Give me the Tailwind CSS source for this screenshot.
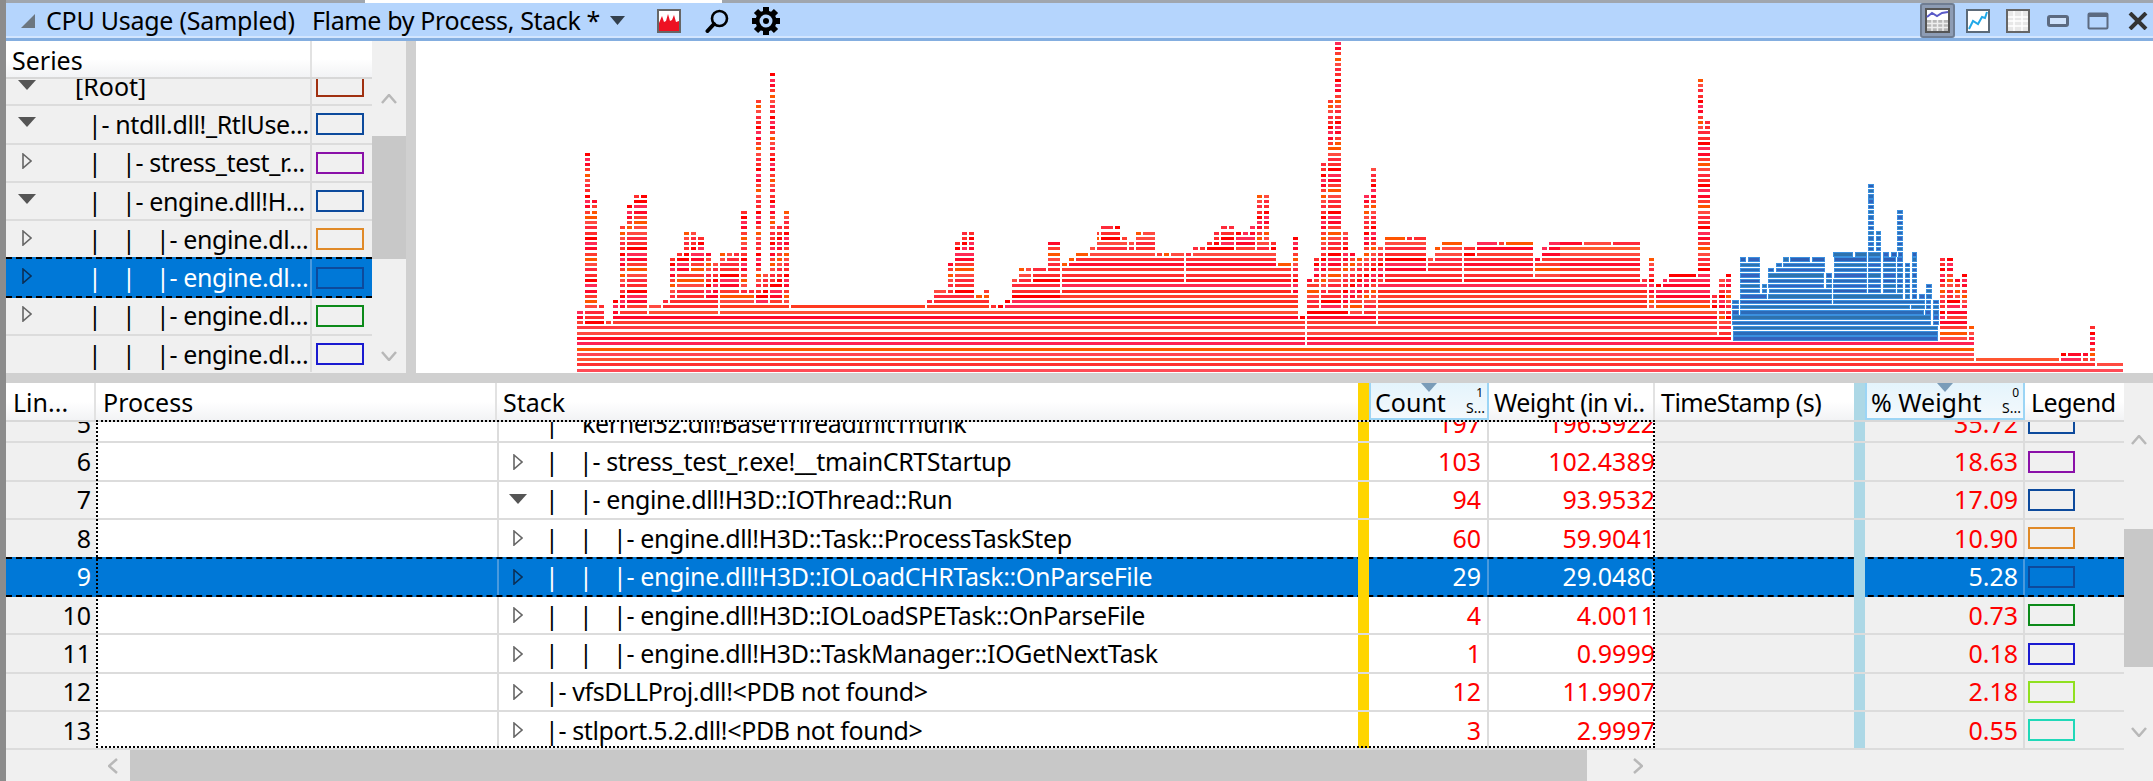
<!DOCTYPE html>
<html lang="en">
  <head>
    <meta charset="UTF-8" />
    <title>CPU Usage (Sampled)</title>
    <script src="https://cdn.jsdelivr.net/npm/@tailwindcss/browser@4"></script>
  </head>
  <body class="w-[2153px] h-[781px] overflow-hidden bg-[#d0d0d0] text-black font-['Noto_Sans',sans-serif] text-[25px] leading-none">
    <!-- shared tree arrows -->
    <svg class="hidden">
      <symbol id="tri-closed" viewBox="0 0 10 16"><path d="M1 1 L9 8 L1 15 Z" fill="none" stroke="currentColor" stroke-width="1.6" /></symbol>
      <symbol id="tri-open" viewBox="0 0 18 10"><path d="M0 0 H18 L9 10 Z" fill="#555" /></symbol>
    </svg>

    <div class="flex h-[781px]">
      <div class="w-[6px] shrink-0 bg-[#8c8c8c]"></div>
      <main class="flex-1 flex flex-col min-w-0">
        <!-- title bar -->
        <div class="h-[3px] flex bg-[#a0a6ae]"><div class="ml-[359px] w-[357px] bg-white"></div></div>
        <header class="h-[38px] flex items-center bg-[#b5d5fd] border-b-[3px] border-[#84aee0] shadow-[inset_0_-2px_0_#d2e5fe]">
          <svg class="ml-[15px] w-[14px] h-[14px]" viewBox="0 0 14 14"><path d="M14 0 V14 H0 Z" fill="#6c7680" /></svg>
          <span class="ml-[11px] w-[266px] whitespace-nowrap tracking-[-0.01em]">CPU Usage (Sampled)</span>
          <span class="w-[298px] whitespace-nowrap tracking-[-0.015em]">Flame by Process, Stack *</span>
          <svg class="w-[15px] h-[9px]" viewBox="0 0 15 9"><path d="M0 0 H15 L7.5 9 Z" fill="#33404d" /></svg>
          <svg class="ml-[32px] w-[24px] h-[24px]" viewBox="0 0 24 24">
            <rect x="1" y="1" width="22" height="22" fill="#fff" stroke="#666" stroke-width="2" />
            <path d="M2 22 V14 L5 7 L7 13 L9 12 L11 5 L13 12 L15 11 L17 6 L19 13 L22 12 V22 Z" fill="#ee1122" />
          </svg>
          <svg class="ml-[24px] w-[24px] h-[24px]" viewBox="0 0 24 24" fill="none" stroke="#000">
            <circle cx="14.500" cy="9.500" r="7.500" stroke-width="2.600" />
            <path d="M9 15 L2.500 22" stroke-width="4" stroke-linecap="round" />
          </svg>
          <svg class="ml-[22px] w-[30px] h-[30px]" viewBox="0 0 30 30">
            <g stroke="#000" stroke-width="6">
              <path d="M15 1 V29" /><path d="M1 15 H29" /><path d="M5 5 L25 25" /><path d="M25 5 L5 25" />
            </g>
            <circle cx="15" cy="15" r="10.500" fill="#000" />
            <circle cx="15" cy="15" r="6.500" fill="#b5d5fd" />
            <circle cx="15" cy="15" r="3" fill="#000" />
          </svg>
          <!-- right side view buttons -->
          <div class="ml-auto flex items-center">
            <div class="w-[35px] h-[35px] flex items-center justify-center bg-[#8d9cb4] border-2 border-[#6f7d92] rounded-[3px]">
              <svg class="w-[25px] h-[25px]" viewBox="0 0 25 25">
                <rect x="1" y="1" width="23" height="23" fill="#fff" stroke="#555" stroke-width="2" />
                <path d="M2 9 L7 5 L12 8 L17 5 L23 4" fill="none" stroke="#5a5ac8" stroke-width="2" />
                <path d="M2 12 H23 V23 H2 Z" fill="#b8b8b8" />
                <path d="M2 15.500 H23 M2 19.500 H23 M7 12 V23 M12.500 12 V23 M18 12 V23" stroke="#eee" stroke-width="1.500" />
              </svg>
            </div>
            <svg class="ml-[11px] w-[24px] h-[24px]" viewBox="0 0 24 24">
              <rect x="1" y="1" width="22" height="22" fill="#fff" stroke="#5c6a78" stroke-width="2" />
              <path d="M3 20 L7 12 L12 15 L16 8 L19 9 L21 3" fill="none" stroke="#20a8e8" stroke-width="2" />
            </svg>
            <svg class="ml-[16px] w-[24px] h-[24px]" viewBox="0 0 24 24">
              <rect x="1" y="1" width="22" height="22" fill="#e8e8e8" stroke="#666" stroke-width="2" />
              <path d="M2 8 H22 M2 12 H22 M2 17 H22 M8 2 V22 M16 2 V22" stroke="#fff" stroke-width="1.500" />
            </svg>
            <svg class="ml-[17px] w-[22px] h-[12px]" viewBox="0 0 22 12">
              <rect x="1.500" y="1.500" width="19" height="9" rx="1.500" fill="#cfe2fb" stroke="#5c6a80" stroke-width="3" />
            </svg>
            <svg class="ml-[18px] w-[22px] h-[18px]" viewBox="0 0 22 18">
              <rect x="1.500" y="1.500" width="19" height="15" rx="1" fill="#b5d5fd" stroke="#5c6a80" stroke-width="2" />
              <path d="M1 3 H21" stroke="#5c6a80" stroke-width="4" />
            </svg>
            <svg class="ml-[19px] mr-[5px] w-[20px] h-[18px]" viewBox="0 0 20 18">
              <path d="M2 1 L18 17 M18 1 L2 17" stroke="#333" stroke-width="4" />
            </svg>
          </div>
        </header>

        <!-- series list + flame graph -->
        <section class="h-[332px] flex">
          <div class="w-[366px] flex flex-col overflow-hidden bg-[#f0f0f0]">
            <div class="h-[38px] shrink-0 relative z-20 flex bg-linear-to-b from-white from-50% to-[#f2f3f5] border-b-2 border-[#d8d8d8]">
              <div class="w-[306px] border-r-2 border-[#e2e2e2] pl-[6px] pt-[7px]">Series</div>
            </div>
            <div class="-mt-[13px]">
              <div class="flex h-[38.3px] items-center border-t-2 border-[#dcdcdc]">
                <div class="w-[306px] flex items-center border-r-2 border-[#dcdcdc] self-stretch"><svg class="ml-[12px] w-[18px] h-[10px] mt-[-2px]"><use href="#tri-open" /></svg><span class="ml-[39px]">[Root]</span></div>
                <div class="ml-[4px] w-[48px] h-[22px] border-2 border-[#a03010]"></div>
              </div>
              <div class="flex h-[38.3px] items-center border-t-2 border-[#dcdcdc]">
                <div class="w-[306px] flex items-center border-r-2 border-[#dcdcdc] self-stretch whitespace-pre overflow-hidden tracking-[-0.015em]"><svg class="shrink-0 ml-[12px] w-[18px] h-[10px] mt-[-4px]"><use href="#tri-open" /></svg><span class="ml-[52px]">|- ntdll.dll!_RtlUse...</span></div>
                <div class="ml-[4px] w-[48px] h-[22px] border-2 border-[#0d4a9c]"></div>
              </div>
              <div class="flex h-[38.3px] items-center border-t-2 border-[#dcdcdc]">
                <div class="w-[306px] flex items-center border-r-2 border-[#dcdcdc] self-stretch whitespace-pre overflow-hidden tracking-[-0.015em]"><svg class="shrink-0 ml-[16px] w-[10px] h-[16px] mt-[-3px] text-[#666]"><use href="#tri-closed" /></svg><span class="ml-[56px] w-[34px]">|</span><span>|- stress_test_r...</span></div>
                <div class="ml-[4px] w-[48px] h-[22px] border-2 border-[#8a10a8]"></div>
              </div>
              <div class="flex h-[38.3px] items-center border-t-2 border-[#dcdcdc]">
                <div class="w-[306px] flex items-center border-r-2 border-[#dcdcdc] self-stretch whitespace-pre overflow-hidden tracking-[-0.015em]"><svg class="shrink-0 ml-[12px] w-[18px] h-[10px] mt-[-4px]"><use href="#tri-open" /></svg><span class="ml-[52px] w-[34px]">|</span><span>|- engine.dll!H...</span></div>
                <div class="ml-[4px] w-[48px] h-[22px] border-2 border-[#0d4a9c]"></div>
              </div>
              <div class="flex h-[38.3px] items-center border-t-2 border-[#dcdcdc]">
                <div class="w-[306px] flex items-center border-r-2 border-[#dcdcdc] self-stretch whitespace-pre overflow-hidden tracking-[-0.015em]"><svg class="shrink-0 ml-[16px] w-[10px] h-[16px] mt-[-3px] text-[#666]"><use href="#tri-closed" /></svg><span class="ml-[56px] w-[34px]">|</span><span class="w-[34px]">|</span><span>|- engine.dl...</span></div>
                <div class="ml-[4px] w-[48px] h-[22px] border-2 border-[#e08a28]"></div>
              </div>
              <div class="relative z-10 flex h-[40.3px] -mb-[2px] items-center bg-[#0078d7] text-white border-y-2 border-dashed border-black">
                <div class="w-[306px] flex items-center border-r-2 border-[#4a9ade] self-stretch whitespace-pre overflow-hidden tracking-[-0.015em]"><svg class="shrink-0 ml-[16px] w-[10px] h-[16px] mt-[-3px] text-[#0b2f55]"><use href="#tri-closed" /></svg><span class="ml-[56px] w-[34px]">|</span><span class="w-[34px]">|</span><span>|- engine.dl...</span></div>
                <div class="ml-[4px] w-[48px] h-[22px] border-2 border-[#0d4a9c]"></div>
              </div>
              <div class="flex h-[38.3px] items-center border-t-2 border-[#dcdcdc]">
                <div class="w-[306px] flex items-center border-r-2 border-[#dcdcdc] self-stretch whitespace-pre overflow-hidden tracking-[-0.015em]"><svg class="shrink-0 ml-[16px] w-[10px] h-[16px] mt-[-3px] text-[#666]"><use href="#tri-closed" /></svg><span class="ml-[56px] w-[34px]">|</span><span class="w-[34px]">|</span><span>|- engine.dl...</span></div>
                <div class="ml-[4px] w-[48px] h-[22px] border-2 border-[#0c8a1a]"></div>
              </div>
              <div class="flex h-[38.3px] items-center border-t-2 border-[#dcdcdc]">
                <div class="w-[306px] flex items-center border-r-2 border-[#dcdcdc] self-stretch whitespace-pre overflow-hidden tracking-[-0.015em]"><span class="ml-[82px] w-[34px]">|</span><span class="w-[34px]">|</span><span>|- engine.dl...</span></div>
                <div class="ml-[4px] w-[48px] h-[22px] border-2 border-[#1a1ad0]"></div>
              </div>
            </div>
          </div>
          <!-- series scrollbar -->
          <div class="w-[34px] flex flex-col bg-[#f0f0f0]">
            <div class="h-[95px] flex items-end justify-center pb-[32px]">
              <svg class="w-[16px] h-[10px]" viewBox="0 0 16 10" fill="none" stroke="#b8b8b8" stroke-width="2.500"><path d="M1 9 L8 1 L15 9" /></svg>
            </div>
            <div class="h-[123px] bg-[#c8c8c8]"></div>
            <div class="flex-1 flex items-end justify-center pb-[12px]">
              <svg class="w-[16px] h-[10px]" viewBox="0 0 16 10" fill="none" stroke="#b8b8b8" stroke-width="2.500"><path d="M1 1 L8 9 L15 1" /></svg>
            </div>
          </div>
          <!-- flame graph -->
          <div class="ml-[10px] flex-1 bg-white">
            <svg id="flame" class="block" width="1737" height="332" viewBox="0 0 1737 332" shape-rendering="crispEdges"></svg>
          </div>
        </section>

        <div class="h-[10px] bg-[#d0d0d0]"></div>

        <!-- detail table -->
        <section class="h-[398px] flex relative">
          <div class="w-[2118px] flex flex-col bg-[#f0f0f0]">
            <div class="h-[39px] shrink-0 relative z-20 flex bg-linear-to-b from-white from-50% to-[#f2f3f5] border-b-2 border-[#d8d8d8]">
              <div class="w-[90px] border-r-2 border-[#e2e2e2] pl-[7px] pt-[7px]">Lin...</div>
              <div class="w-[401px] border-r-2 border-[#e2e2e2] pl-[7px] pt-[7px]">Process</div>
              <div class="w-[861px] pl-[6px] pt-[7px]">Stack</div>
              <div class="w-[11px] bg-[#ffd500]"></div>
              <div class="relative w-[120px] border-2 border-t-0 border-[#9cd5f5] bg-linear-to-b from-[#e4f4fc] to-[#f4f9fc] pl-[4px] pt-[7px]">Count
                <svg class="absolute top-0 left-[50px] w-[16px] h-[9px]" viewBox="0 0 16 9"><path d="M0 0 H16 L8 9 Z" fill="#7a9cb8" /></svg>
                <span class="absolute top-[4px] right-[4px] text-[12px]">1</span>
                <span class="absolute bottom-[3px] right-[2px] text-[14px]">S...</span>
              </div>
              <div class="w-[166px] border-r-2 border-[#e2e2e2] pl-[5px] pt-[7px] whitespace-nowrap overflow-hidden tracking-[-0.02em]">Weight (in vi..</div>
              <div class="w-[199px] pl-[6px] pt-[7px] whitespace-nowrap tracking-[-0.02em]">TimeStamp (s)</div>
              <div class="w-[11px] bg-[#add8e6]"></div>
              <div class="relative w-[160px] border-2 border-t-0 border-[#9cd5f5] bg-linear-to-b from-[#e4f4fc] to-[#f4f9fc] pl-[4px] pt-[7px] whitespace-nowrap">% Weight
                <svg class="absolute top-0 left-[70px] w-[16px] h-[9px]" viewBox="0 0 16 9"><path d="M0 0 H16 L8 9 Z" fill="#7a9cb8" /></svg>
                <span class="absolute top-[4px] right-[4px] text-[12px]">0</span>
                <span class="absolute bottom-[3px] right-[2px] text-[14px]">S...</span>
              </div>
              <div class="w-[99px] pl-[6px] pt-[7px] tracking-[-0.02em]">Legend</div>
            </div>
            <div class="-mt-[19px] flex-1 min-h-0 overflow-hidden">
              <div class="flex h-[38.4px] items-center border-t-2 border-[#dcdcdc]">
                <div class="w-[90px] self-stretch flex items-center justify-end pr-[5px]">5</div>
                <div class="w-[401px] self-stretch bg-white"></div>
                <div class="w-[861px] self-stretch flex items-center bg-white border-l-2 border-[#dcdcdc] whitespace-pre tracking-[-0.015em]"><span class="ml-[46px] w-[37px]">|</span><span>kernel32.dll!BaseThreadInitThunk</span></div>
                <div class="w-[11px] self-stretch bg-[#ffd500]"></div>
                <div class="w-[120px] self-stretch flex items-center justify-end pr-[6px] bg-white text-[#ff0000] border-r-2 border-[#dcdcdc]">197</div>
                <div class="w-[166px] self-stretch flex items-center justify-end bg-white text-[#ff0000] overflow-hidden">196.3922</div>
                <div class="w-[199px] self-stretch"></div>
                <div class="w-[11px] self-stretch bg-[#add8e6]"></div>
                <div class="w-[160px] self-stretch flex items-center justify-end pr-[5px] text-[#ff0000] border-r-2 border-[#dcdcdc]">35.72</div>
                <div class="ml-[3px] w-[47px] h-[22px] border-2 border-[#0d4a9c]"></div>
              </div>
              <div class="flex h-[38.4px] items-center border-t-2 border-[#dcdcdc]">
                <div class="w-[90px] self-stretch flex items-center justify-end pr-[5px]">6</div>
                <div class="w-[401px] self-stretch bg-white"></div>
                <div class="w-[861px] self-stretch flex items-center bg-white border-l-2 border-[#dcdcdc] whitespace-pre tracking-[-0.015em]"><svg class="ml-[14px] w-[10px] h-[16px] text-[#666]"><use href="#tri-closed" /></svg><span class="ml-[22px] w-[34px]">|</span><span>|- stress_test_r.exe!__tmainCRTStartup</span></div>
                <div class="w-[11px] self-stretch bg-[#ffd500]"></div>
                <div class="w-[120px] self-stretch flex items-center justify-end pr-[6px] bg-white text-[#ff0000] border-r-2 border-[#dcdcdc]">103</div>
                <div class="w-[166px] self-stretch flex items-center justify-end bg-white text-[#ff0000] overflow-hidden">102.4389</div>
                <div class="w-[199px] self-stretch"></div>
                <div class="w-[11px] self-stretch bg-[#add8e6]"></div>
                <div class="w-[160px] self-stretch flex items-center justify-end pr-[5px] text-[#ff0000] border-r-2 border-[#dcdcdc]">18.63</div>
                <div class="ml-[3px] w-[47px] h-[22px] border-2 border-[#8a10a8]"></div>
              </div>
              <div class="flex h-[38.4px] items-center border-t-2 border-[#dcdcdc]">
                <div class="w-[90px] self-stretch flex items-center justify-end pr-[5px]">7</div>
                <div class="w-[401px] self-stretch bg-white"></div>
                <div class="w-[861px] self-stretch flex items-center bg-white border-l-2 border-[#dcdcdc] whitespace-pre tracking-[-0.015em]"><svg class="ml-[10px] w-[18px] h-[10px] mt-[-2px]"><use href="#tri-open" /></svg><span class="ml-[18px] w-[34px]">|</span><span>|- engine.dll!H3D::IOThread::Run</span></div>
                <div class="w-[11px] self-stretch bg-[#ffd500]"></div>
                <div class="w-[120px] self-stretch flex items-center justify-end pr-[6px] bg-white text-[#ff0000] border-r-2 border-[#dcdcdc]">94</div>
                <div class="w-[166px] self-stretch flex items-center justify-end bg-white text-[#ff0000] overflow-hidden">93.9532</div>
                <div class="w-[199px] self-stretch"></div>
                <div class="w-[11px] self-stretch bg-[#add8e6]"></div>
                <div class="w-[160px] self-stretch flex items-center justify-end pr-[5px] text-[#ff0000] border-r-2 border-[#dcdcdc]">17.09</div>
                <div class="ml-[3px] w-[47px] h-[22px] border-2 border-[#0d4a9c]"></div>
              </div>
              <div class="flex h-[38.4px] items-center border-t-2 border-[#dcdcdc]">
                <div class="w-[90px] self-stretch flex items-center justify-end pr-[5px]">8</div>
                <div class="w-[401px] self-stretch bg-white"></div>
                <div class="w-[861px] self-stretch flex items-center bg-white border-l-2 border-[#dcdcdc] whitespace-pre tracking-[-0.015em]"><svg class="ml-[14px] w-[10px] h-[16px] text-[#666]"><use href="#tri-closed" /></svg><span class="ml-[22px] w-[34px]">|</span><span class="w-[34px]">|</span><span>|- engine.dll!H3D::Task::ProcessTaskStep</span></div>
                <div class="w-[11px] self-stretch bg-[#ffd500]"></div>
                <div class="w-[120px] self-stretch flex items-center justify-end pr-[6px] bg-white text-[#ff0000] border-r-2 border-[#dcdcdc]">60</div>
                <div class="w-[166px] self-stretch flex items-center justify-end bg-white text-[#ff0000] overflow-hidden">59.9041</div>
                <div class="w-[199px] self-stretch"></div>
                <div class="w-[11px] self-stretch bg-[#add8e6]"></div>
                <div class="w-[160px] self-stretch flex items-center justify-end pr-[5px] text-[#ff0000] border-r-2 border-[#dcdcdc]">10.90</div>
                <div class="ml-[3px] w-[47px] h-[22px] border-2 border-[#e08a28]"></div>
              </div>
              <!-- selected row -->
              <div class="relative z-10 flex h-[40.4px] -mb-[2px] items-center bg-[#0078d7] text-white border-y-2 border-dashed border-black">
                <div class="w-[90px] self-stretch flex items-center justify-end pr-[5px]">9</div>
                <div class="w-[401px] self-stretch"></div>
                <div class="w-[861px] self-stretch flex items-center border-l-2 border-[#4a9ade] whitespace-pre tracking-[-0.015em]"><svg class="ml-[14px] w-[10px] h-[16px] text-[#0b2f55]"><use href="#tri-closed" /></svg><span class="ml-[22px] w-[34px]">|</span><span class="w-[34px]">|</span><span>|- engine.dll!H3D::IOLoadCHRTask::OnParseFile</span></div>
                <div class="w-[11px] -my-[2px] self-stretch bg-[#ffd500]"></div>
                <div class="w-[120px] self-stretch flex items-center justify-end pr-[6px] border-r-2 border-[#4a9ade]">29</div>
                <div class="w-[166px] self-stretch flex items-center justify-end overflow-hidden">29.0480</div>
                <div class="w-[199px] self-stretch"></div>
                <div class="w-[11px] -my-[2px] self-stretch bg-[#add8e6]"></div>
                <div class="w-[160px] self-stretch flex items-center justify-end pr-[5px] border-r-2 border-[#4a9ade]">5.28</div>
                <div class="ml-[3px] w-[47px] h-[22px] border-2 border-[#0d4a9c]"></div>
              </div>
              <div class="flex h-[38.4px] items-center border-t-2 border-[#dcdcdc]">
                <div class="w-[90px] self-stretch flex items-center justify-end pr-[5px]">10</div>
                <div class="w-[401px] self-stretch bg-white"></div>
                <div class="w-[861px] self-stretch flex items-center bg-white border-l-2 border-[#dcdcdc] whitespace-pre tracking-[-0.015em]"><svg class="ml-[14px] w-[10px] h-[16px] text-[#666]"><use href="#tri-closed" /></svg><span class="ml-[22px] w-[34px]">|</span><span class="w-[34px]">|</span><span>|- engine.dll!H3D::IOLoadSPETask::OnParseFile</span></div>
                <div class="w-[11px] self-stretch bg-[#ffd500]"></div>
                <div class="w-[120px] self-stretch flex items-center justify-end pr-[6px] bg-white text-[#ff0000] border-r-2 border-[#dcdcdc]">4</div>
                <div class="w-[166px] self-stretch flex items-center justify-end bg-white text-[#ff0000] overflow-hidden">4.0011</div>
                <div class="w-[199px] self-stretch"></div>
                <div class="w-[11px] self-stretch bg-[#add8e6]"></div>
                <div class="w-[160px] self-stretch flex items-center justify-end pr-[5px] text-[#ff0000] border-r-2 border-[#dcdcdc]">0.73</div>
                <div class="ml-[3px] w-[47px] h-[22px] border-2 border-[#0c8a1a]"></div>
              </div>
              <div class="flex h-[38.4px] items-center border-t-2 border-[#dcdcdc]">
                <div class="w-[90px] self-stretch flex items-center justify-end pr-[5px]">11</div>
                <div class="w-[401px] self-stretch bg-white"></div>
                <div class="w-[861px] self-stretch flex items-center bg-white border-l-2 border-[#dcdcdc] whitespace-pre tracking-[-0.015em]"><svg class="ml-[14px] w-[10px] h-[16px] text-[#666]"><use href="#tri-closed" /></svg><span class="ml-[22px] w-[34px]">|</span><span class="w-[34px]">|</span><span>|- engine.dll!H3D::TaskManager::IOGetNextTask</span></div>
                <div class="w-[11px] self-stretch bg-[#ffd500]"></div>
                <div class="w-[120px] self-stretch flex items-center justify-end pr-[6px] bg-white text-[#ff0000] border-r-2 border-[#dcdcdc]">1</div>
                <div class="w-[166px] self-stretch flex items-center justify-end bg-white text-[#ff0000] overflow-hidden">0.9999</div>
                <div class="w-[199px] self-stretch"></div>
                <div class="w-[11px] self-stretch bg-[#add8e6]"></div>
                <div class="w-[160px] self-stretch flex items-center justify-end pr-[5px] text-[#ff0000] border-r-2 border-[#dcdcdc]">0.18</div>
                <div class="ml-[3px] w-[47px] h-[22px] border-2 border-[#1a1ad0]"></div>
              </div>
              <div class="flex h-[38.4px] items-center border-t-2 border-[#dcdcdc]">
                <div class="w-[90px] self-stretch flex items-center justify-end pr-[5px]">12</div>
                <div class="w-[401px] self-stretch bg-white"></div>
                <div class="w-[861px] self-stretch flex items-center bg-white border-l-2 border-[#dcdcdc] whitespace-pre tracking-[-0.015em]"><svg class="ml-[14px] w-[10px] h-[16px] text-[#666]"><use href="#tri-closed" /></svg><span class="ml-[22px]">|- vfsDLLProj.dll!&lt;PDB not found&gt;</span></div>
                <div class="w-[11px] self-stretch bg-[#ffd500]"></div>
                <div class="w-[120px] self-stretch flex items-center justify-end pr-[6px] bg-white text-[#ff0000] border-r-2 border-[#dcdcdc]">12</div>
                <div class="w-[166px] self-stretch flex items-center justify-end bg-white text-[#ff0000] overflow-hidden">11.9907</div>
                <div class="w-[199px] self-stretch"></div>
                <div class="w-[11px] self-stretch bg-[#add8e6]"></div>
                <div class="w-[160px] self-stretch flex items-center justify-end pr-[5px] text-[#ff0000] border-r-2 border-[#dcdcdc]">2.18</div>
                <div class="ml-[3px] w-[47px] h-[22px] border-2 border-[#90e020]"></div>
              </div>
              <div class="flex h-[38.4px] items-center border-t-2 border-[#dcdcdc]">
                <div class="w-[90px] self-stretch flex items-center justify-end pr-[5px]">13</div>
                <div class="w-[401px] self-stretch bg-white"></div>
                <div class="w-[861px] self-stretch flex items-center bg-white border-l-2 border-[#dcdcdc] whitespace-pre tracking-[-0.015em]"><svg class="ml-[14px] w-[10px] h-[16px] text-[#666]"><use href="#tri-closed" /></svg><span class="ml-[22px]">|- stlport.5.2.dll!&lt;PDB not found&gt;</span></div>
                <div class="w-[11px] self-stretch bg-[#ffd500]"></div>
                <div class="w-[120px] self-stretch flex items-center justify-end pr-[6px] bg-white text-[#ff0000] border-r-2 border-[#dcdcdc]">3</div>
                <div class="w-[166px] self-stretch flex items-center justify-end bg-white text-[#ff0000] overflow-hidden">2.9997</div>
                <div class="w-[199px] self-stretch"></div>
                <div class="w-[11px] self-stretch bg-[#add8e6]"></div>
                <div class="w-[160px] self-stretch flex items-center justify-end pr-[5px] text-[#ff0000] border-r-2 border-[#dcdcdc]">0.55</div>
                <div class="ml-[3px] w-[47px] h-[22px] border-2 border-[#20d8b8]"></div>
              </div>
            </div>
            <!-- horizontal scrollbar -->
            <div class="h-[33px] shrink-0 flex bg-[#f0f0f0] border-t-2 border-[#dcdcdc]">
              <div class="w-[124px] flex items-center justify-end pr-[12px]">
                <svg class="w-[10px] h-[16px]" viewBox="0 0 10 16" fill="none" stroke="#b8b8b8" stroke-width="2.500"><path d="M9 1 L1 8 L9 15" /></svg>
              </div>
              <div class="w-[1457px] bg-[#c8c8c8]"></div>
              <div class="ml-[46px] flex items-center">
                <svg class="w-[10px] h-[16px]" viewBox="0 0 10 16" fill="none" stroke="#b8b8b8" stroke-width="2.500"><path d="M1 1 L9 8 L1 15" /></svg>
              </div>
            </div>
          </div>
          <!-- vertical scrollbar -->
          <div class="w-[29px] flex flex-col bg-[#f0f0f0]">
            <div class="h-[146px] flex items-start justify-center pt-[52px]">
              <svg class="w-[16px] h-[10px]" viewBox="0 0 16 10" fill="none" stroke="#b8b8b8" stroke-width="2.500"><path d="M1 9 L8 1 L15 9" /></svg>
            </div>
            <div class="h-[138px] bg-[#c8c8c8]"></div>
            <div class="h-[70px] flex items-end justify-center">
              <svg class="w-[16px] h-[10px]" viewBox="0 0 16 10" fill="none" stroke="#b8b8b8" stroke-width="2.500"><path d="M1 1 L8 9 L15 1" /></svg>
            </div>
          </div>
          <!-- dotted focus rectangle -->
          <div class="absolute z-30 left-[90px] top-[37px] w-[1559px] h-[328px] border-2 border-dotted border-black pointer-events-none"></div>
        </section>
      </main>
    </div>

    <script>
      // flame graph rows: "from-to:x0-x1 ..." measured off the reference, grouped by x range
      var pages = [
        { ox: 560, s: 3, rows: `0-8:50-1500
9:50-70 75-132 138-153 159-1500
10:50-70 75-132 159-1500
11:50-70 75-132 159-175 180-262 267-475 480-1500
12:75-112 117-132 159-175 180-196 201-262 267-303 309-475 480-688 693-1096 1101-1288 1293-1308 1314-1330 1335-1500
13:75-112 159-175 180-196 201-262 309-325 330-475 480-582 588-624 630-666 672-688 1101-1116 1122-1288 1335-1351 1356-1500
14:75-112 180-196 201-262 330-346 351-433 438-475 480-582 588-624 630-666 672-688 1122-1243 1248-1267 1272-1288 1356-1500
15:75-112 180-196 201-262 330-346 351-433 438-454 459-475 480-538 543-561 567-582 588-603 609-624 630-666 672-688 1122-1159 1164-1180 1185-1243 1272-1288 1356-1500
16:75-112 180-196 201-262 330-346 351-433 438-454 459-475 480-538 543-561 588-603 609-624 630-666 672-688 1164-1180 1185-1243 1356-1500
17:75-112 180-196 201-262 330-346 351-433 438-454 459-475 480-538 543-561 588-603 609-624 630-645 651-666 672-688 1164-1180 1185-1243 1356-1372 1377-1413 1419-1500
18:75-112 180-196 201-262 330-346 351-433 438-454 459-475 480-538 543-561 588-603 609-624 630-645 651-666 672-688 1164-1180 1185-1243 1377-1413 1419-1500
19:75-112 180-196 201-262 330-346 351-387 393-433 438-454 459-475 480-538 543-561 588-603 630-645 651-666 672-688 1164-1180 1185-1243 1377-1392 1398-1413 1419-1459 1464-1500
20:75-112 180-196 201-262 330-346 351-387 393-433 438-454 459-475 480-538 543-561 588-603 630-645 651-666 672-688 1164-1180 1185-1243 1464-1500
21:75-112 180-196 201-262 330-346 351-387 393-433 438-454 480-496 501-538 543-561 588-603 630-645 651-666 672-688 1185-1243 1464-1500
22:75-112 180-196 201-262 351-367 372-387 393-433 438-454 480-496 501-517 522-538 543-561 588-603 630-645 651-666 672-688 1185-1243 1464-1500
23-24:75-112 180-196 201-262 372-387 393-408 414-433 543-561 588-603 630-645 651-666 672-688 1185-1200 1206-1221 1227-1243 1464-1500
25:75-112 180-196 201-262 372-387 393-408 414-433 543-561 588-603 630-645 651-666 672-688 1206-1221 1227-1243
26:75-112 180-196 201-262 372-387 393-408 543-561 588-603 630-645 651-666 672-688 1206-1221 1227-1243
27:75-112 180-196 201-216 222-262 543-561 588-603 630-645 651-666 672-688
28-29:75-112 201-216 222-262 543-561 588-603 630-645 672-688
30:75-90 96-112 201-216 222-262 543-561 588-603 630-645 672-688
31:75-90 96-112 201-216 222-262 588-603 630-645
32:75-90 96-112 222-262 588-603 630-645
33:75-90 222-238 243-262 588-603 630-645
34-41:75-90 588-603 630-645
42-51:588-603 630-645
52-56:630-645` },
        { ox: 1060, s: 3, rows: `0-4:0-1500
5-8:0-735 741-1500
9:0-735 741-948 954-1500
10:0-714 720-735 741-948 954-1500
11:0-714 741-864 870-906 912-948 954-1500
12-13:0-714 741-777 783-843 849-864 870-906 912-948 954-1500
14:0-714 741-777 783-843 849-864 870-885 891-906 912-927 933-948 954-1500
15-16:6-693 699-714 741-777 783-798 804-843 849-864 870-885 891-906 912-927 933-948 954-1500
17:6-372 378-693 699-714 741-756 762-777 783-798 804-843 849-864 870-885 891-906 912-927 933-948 954-969 975-1206 1212-1500
18:6-372 378-693 699-714 762-777 783-798 804-843 849-864 870-885 891-906 912-927 933-948 954-969 975-1206 1212-1419 1425-1500
19:6-372 378-693 699-714 762-777 783-798 804-843 849-864 870-885 891-906 912-927 933-948 954-969 975-1098 1104-1206 1212-1419 1425-1500
20:6-21 27-372 378-648 654-693 699-714 762-777 783-798 804-843 849-864 870-885 891-906 912-927 933-948 954-969 975-1098 1104-1206 1212-1419 1425-1500
21:27-42 48-372 378-648 699-714 762-777 783-798 804-843 849-864 870-885 891-906 912-927 933-948 954-969 975-1098 1104-1119 1125-1206 1212-1419 1425-1440 1446-1500
22:48-84 90-285 291-306 312-327 333-372 378-393 399-648 699-714 783-798 804-843 849-864 870-885 912-927 933-948 954-969 975-1098 1125-1206 1212-1245 1251-1419 1446-1500
23:90-105 111-201 207-222 228-285 399-414 420-435 441-522 528-585 591-627 633-648 699-714 783-798 804-843 849-864 912-927 933-948 954-969 975-1098 1125-1140 1146-1206 1212-1245 1251-1419 1446-1461 1467-1500
24:111-201 207-222 228-285 441-456 462-477 483-522 528-585 591-627 633-648 699-714 783-798 804-843 849-864 912-927 933-948 975-1098 1146-1206 1251-1311 1317-1332 1338-1419 1467-1500
25:111-117 123-180 186-201 228-285 462-477 483-522 528-585 591-606 612-627 699-714 783-798 804-843 849-864 912-927 933-948 975-1035 1041-1056 1062-1098
26:111-117 123-180 228-243 249-285 462-477 483-522 528-543 549-564 570-585 591-606 612-627 783-798 804-843 849-864 912-927 933-948
27:123-159 165-180 483-501 507-522 570-585 591-606 612-627 783-798 804-843 912-927 933-948
28-33:591-606 612-627 783-798 804-843 912-927 933-948
34-38:783-798 804-843 933-948
39:783-798 804-843
40-42:804-843
43-51:804-819 825-843
52-62:825-843` },
        { ox: 1560, s: 2.644, rows: `0:0-1489
1:0-1415 1420-1489
2:0-1095 1100-1320 1325-1378 1383-1395 1401-1415
3:0-1095 1325-1338 1343-1378 1383-1395 1401-1415
4-5:0-1095 1401-1415
6:0-452 1005-1076 1082-1095 1401-1415
7-8:0-415 420-452 1005-1076 1082-1095 1401-1415
9:0-415 420-452 1005-1076
10-11:0-415 420-435 440-452 1005-1018 1023-1076
12-13:0-230 235-248 254-397 402-415 420-435 440-452 1005-1018 1023-1058 1064-1076
14:0-230 235-248 254-397 402-415 420-435 440-452 1005-1018 1023-1040 1045-1058 1064-1076
15:0-230 235-248 254-397 420-435 440-452 1005-1018 1023-1040 1045-1058 1064-1076
16:0-230 235-248 254-267 272-397 420-435 440-452 1005-1018 1023-1040 1045-1058 1064-1076
17:0-212 217-230 235-248 272-284 288-397 420-435 440-452 1005-1018 1023-1040 1045-1058 1064-1076
18:0-212 235-248 288-360 365-397 440-452 1005-1018 1023-1040 1064-1076
19-21:0-212 235-248 365-397 1005-1018 1023-1040
22-23:0-212 365-397
24:0-58 63-135 140-212 365-397
25-45:365-397
46-47:365-378 383-397
48-55:365-378` }
      ];
      var bluePage = { ox: 1560, s: 2.644, rows: `6-8:457-1000
9:455-982 985-1002
10:455-982 985-1002
11:455-473 477-962 966-982 985-1002
12:455-473 477-925 929-965 968-982 985-1002
13:455-473 477-720 723-965 968-982 985-1002
14:477-547 551-720 723-908 911-925 930-945 949-965 968-984
15:477-530 533-547 553-720 723-812 815-850 853-888 892-908 912-925 930-945 968-984
16:477-530 533-547 551-698 702-720 723-812 815-850 853-888 892-908 912-925 930-945 968-984
17:477-530 551-698 702-720 723-812 815-850 853-888 892-908 912-925 930-945
18:477-530 551-698 702-720 725-812 815-850 853-888 892-908 912-925 930-945
19:477-530 551-566 570-700 725-812 815-850 853-888 892-908 912-925 930-945
20:477-530 570-586 590-700 725-812 815-850 853-888 892-908 912-925 930-945
21:477-492 496-530 590-605 609-661 665-700 725-812 815-850 853-888 892-908 930-945
22:723-775 779-812 815-850 853-870 874-890 894-908 930-945
23-26:815-830 835-850 892-908
27-30:815-830 892-908
31-35:815-830` };

      var rowColors = ["#ff4a55", "#ff3030", "#ff5530", "#ff4550", "#ff5a00", "#ff2255", "#ff1020", "#ff4a40", "#ff3a40", "#ff3a30", "#ff0a2a", "#ff5033", "#ff3a20", "#ff2a20", "#ff4030", "#ff2a20", "#ff2a50", "#ff1a20", "#ff3030", "#ff3a30", "#ff1030", "#ff3030", "#ff4a40", "#ff5a30", "#ff3030"];
      var hot = ["#ff0a2a", "#ff3b30", "#ff5500", "#ff4a40", "#ff2a3a", "#ff2d2d", "#ff0000", "#ff2a55"];
      var cool = ["#2f5fb5", "#2f72ad", "#2d6bb8", "#3563bd"];

      function draw(page, blue) {
        var out = "";
        page.rows.split("\n").forEach(function (line) {
          var parts = line.split(":");
          var span = parts[0].split("-");
          var from = +span[0], to = +(span[1] || span[0]);
          for (var r = from; r <= to; r++) {
            parts[1].split(" ").forEach(function (seg) {
              var ab = seg.split("-");
              var x = page.ox + ab[0] / page.s - 416, w = (ab[1] - ab[0]) / page.s;
              var y = 370.3 - r * 5.27 - 41 - 1.7;
              var pick = (r * 7 + (+ab[0]) * 13) >> 0;
              if (blue) {
                out += '<rect x="' + x + '" y="' + (y - 0.5) + '" width="' + w + '" height="4.4" fill="#3a90e0" />';
                out += '<rect x="' + (x + 1) + '" y="' + (y + 0.5) + '" width="' + (w - 2) + '" height="2.4" fill="' + cool[pick % 4] + '" />';
              } else {
                var c = w > 60 && r < rowColors.length ? rowColors[r] : hot[pick % 8];
                out += '<rect x="' + x + '" y="' + y + '" width="' + w + '" height="3" fill="' + c + '" />';
              }
            });
          }
        });
        return out;
      }
      document.getElementById("flame").innerHTML = pages.map(function (p) { return draw(p, false); }).join("") + draw(bluePage, true);
    </script>
  </body>
</html>
